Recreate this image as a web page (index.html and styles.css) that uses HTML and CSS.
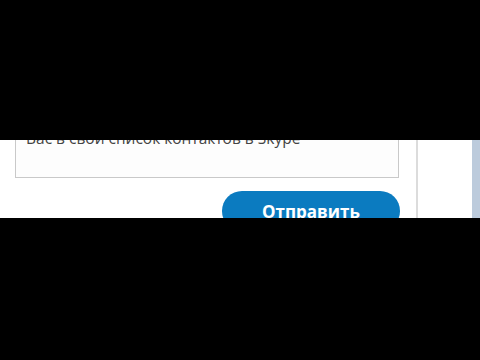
FILE: index.html
```html
<!DOCTYPE html>
<html lang="ru">
<head>
<meta charset="utf-8">
<link rel="stylesheet" href="styles.css">
</head>
<body>
<div class="screen">
  <div class="bar-top"></div>
  <div class="band">
    <div class="main">
      <div class="message">Вас в свой список контактов в Skype</div>
      <div class="actions">
        <button class="send">Отправить</button>
      </div>
    </div>
    <div class="divider"></div>
    <div class="side"></div>
    <div class="edge"></div>
  </div>
  <div class="bar-bottom"></div>
</div>
</body>
</html>
```
FILE: styles.css
```css
html, body {
  margin: 0;
  padding: 0;
  background: #000;
}
.screen {
  width: 480px;
  height: 360px;
  display: flex;
  flex-direction: column;
}
.bar-top {
  height: 140px;
  background: #000;
}
.band {
  height: 78px;
  background: #fff;
  display: flex;
  overflow: hidden;
}
.bar-bottom {
  flex: 1;
  background: #000;
}
.main {
  width: 416px;
  padding-left: 15px;
  box-sizing: border-box;
}
.message {
  width: 384px;
  height: 68px;
  margin-top: -30px;
  box-sizing: border-box;
  border: 1px solid #c9c9c9;
  padding: 17px 9px 0 10px;
  font-family: "Open Sans", sans-serif;
  font-size: 15.5px;
  line-height: 20px;
  color: #444;
  background: #fdfdfd;
}
.actions {
  display: flex;
  justify-content: flex-end;
  width: 384px;
  padding-top: 13px;
}
.send {
  width: 178px;
  height: 40px;
  border: none;
  border-radius: 20px;
  background: #0b7bc0;
  color: #fff;
  font-family: "Open Sans", sans-serif;
  font-weight: 700;
  font-size: 17px;
  padding: 0;
  margin-right: -1px;
}
.divider {
  width: 2px;
  background: #dcdcdc;
}
.side {
  width: 54px;
  background: #fff;
}
.edge {
  flex: 1;
  background: #bccbdc;
}
```
